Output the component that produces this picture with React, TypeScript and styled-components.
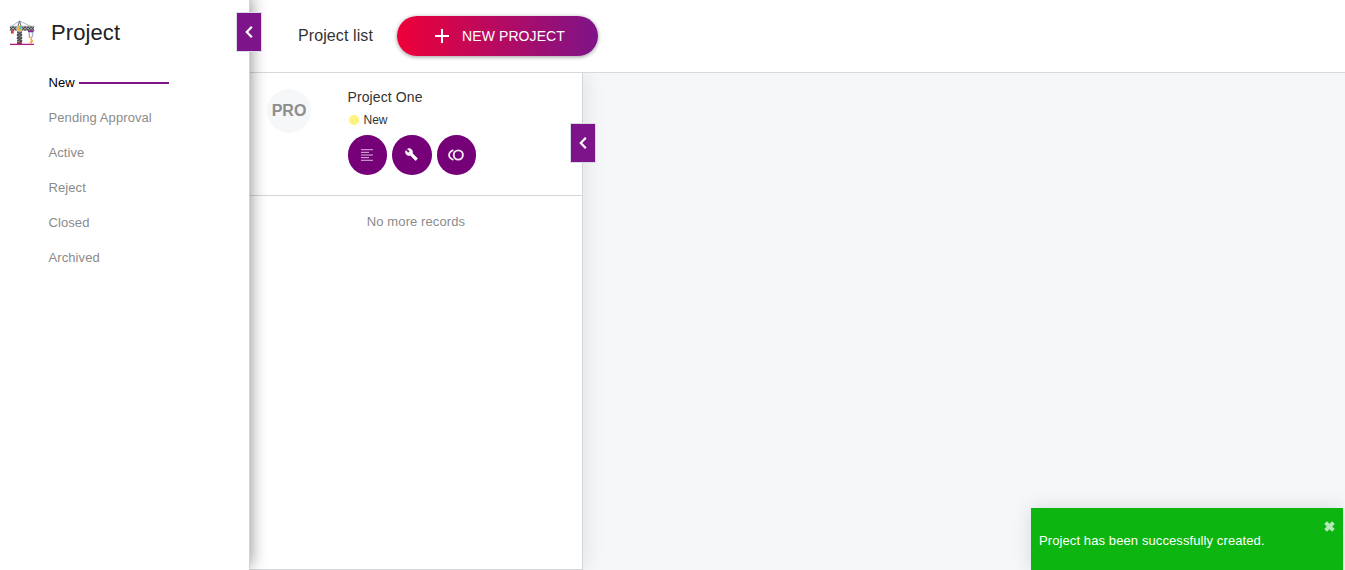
import React from 'react';
import styled, { createGlobalStyle } from 'styled-components';

const GlobalStyle = createGlobalStyle`
  * { box-sizing: border-box; }
  body {
    margin: 0;
    background: #f5f7f9;
    font-family: "Liberation Sans", Arial, Helvetica, sans-serif;
    color: #333;
    overflow: hidden;
  }
  button { font: inherit; border: 0; padding: 0; cursor: pointer; }
`;

const Page = styled.div`
  display: flex;
  height: 570px;
`;

const Sidebar = styled.aside`
  position: relative;
  z-index: 2;
  width: 250px;
  flex: none;
  background: #fff;
  border-right: 1px solid #ced4da;
  box-shadow: 0 -4px 16px rgba(0, 0, 0, 0.48);
`;

const SidebarHeader = styled.header`
  display: flex;
  align-items: center;
  gap: 16px;
  height: 65px;
  padding-left: 9px;
`;

const SidebarTitle = styled.h1`
  margin: 0;
  font-size: 22px;
  font-weight: 400;
  line-height: 28px;
  color: #212121;
  letter-spacing: 0.1px;
`;

const StatusList = styled.ul`
  list-style: none;
  margin: 0;
  padding: 0 0 0 48.5px;
`;

const StatusItem = styled.li<{ $active?: boolean }>`
  display: flex;
  align-items: center;
  gap: 4px;
  height: 35px;
  font-size: 13px;
  letter-spacing: 0.09px;
  color: ${(p) => (p.$active ? '#000' : '#8b8b8b')};
  &::after {
    content: '';
    display: ${(p) => (p.$active ? 'block' : 'none')};
    width: 90px;
    height: 2px;
    background: #7e1489;
  }
`;

const CollapseButton = styled.button<{ $top: number; $right?: number }>`
  position: absolute;
  z-index: 3;
  top: ${(p) => p.$top}px;
  right: ${(p) => p.$right ?? -13}px;
  display: flex;
  align-items: center;
  justify-content: center;
  width: 26px;
  height: 40px;
  background: #7e1489;
  border: 1px solid #dadce4;
`;

const Main = styled.main`
  display: flex;
  flex-direction: column;
  flex: 1;
  min-width: 0;
`;

const Toolbar = styled.header`
  display: flex;
  align-items: center;
  gap: 24px;
  height: 73px;
  flex: none;
  padding-left: 48px;
  background: #fff;
  border-bottom: 1px solid #d5dade;
`;

const ToolbarTitle = styled.h2`
  margin: 0;
  font-size: 16px;
  font-weight: 400;
  letter-spacing: 0.1px;
`;

const NewProjectButton = styled.button`
  display: flex;
  align-items: center;
  justify-content: center;
  gap: 13px;
  width: 201px;
  height: 40px;
  border-radius: 20px;
  background: linear-gradient(90deg, #ee0039, #7e1489);
  box-shadow: 0 1px 4px rgba(0, 0, 0, 0.4);
  color: #fff;
  && { padding-left: 5px; font-size: 14px; letter-spacing: 0.08px; }
`;

const Content = styled.div`
  display: flex;
  flex: 1;
`;

const ListPanel = styled.section`
  position: relative;
  width: 333px;
  background: #fff;
  border-right: 1px solid #d5d6d8;
  border-bottom: 1px solid #d5d6d8;
  box-shadow: 2px 0 20px rgba(0, 0, 0, 0.09);
  clip-path: inset(0 -40px 0 0);
`;

const ProjectCard = styled.article`
  display: flex;
  gap: 36.5px;
  height: 123px;
  padding: 16px 0 0 17px;
  border-bottom: 1px solid #d5d6d8;
`;

const Avatar = styled.div`
  display: flex;
  align-items: center;
  justify-content: center;
  width: 44px;
  height: 44px;
  border-radius: 50%;
  background: #f5f7f9;
  color: #8d8d8d;
  font-size: 16px;
  font-weight: 700;
`;

const ProjectName = styled.h3`
  margin: 0 0 6px;
  font-size: 14px;
  line-height: 17px;
  font-weight: 400;
  letter-spacing: 0.1px;
`;

const ProjectStatus = styled.div`
  display: flex;
  align-items: center;
  gap: 5px;
  height: 16px;
  font-size: 12px;
  &::before {
    content: '';
    width: 10px;
    height: 10px;
    margin-left: 1px;
    border-radius: 50%;
    background: #fff27d;
  }
`;

const Actions = styled.div`
  display: flex;
  gap: 5px;
  margin: 7.3px 0 0 0.3px;
`;

const ActionButton = styled.button`
  display: flex;
  align-items: center;
  justify-content: center;
  width: 39.4px;
  height: 39.4px;
  border-radius: 50%;
  background: #750078;
`;

const EmptyMessage = styled.p`
  margin: 18px 0 0;
  text-align: center;
  font-size: 13px;
  line-height: 15px;
  letter-spacing: 0.1px;
  color: #8b8b8b;
`;

const Toast = styled.div`
  position: absolute;
  z-index: 5;
  left: 1031px;
  top: 508px;
  width: 312px;
  height: 62px;
  padding: 25px 8px 0;
  background: #0cb50f;
  box-shadow: 0 0 18px rgba(0, 0, 0, 0.13);
  color: #fff;
  font-size: 13px;
  line-height: 16px;
  letter-spacing: 0.1px;
`;

const ToastClose = styled.button`
  position: absolute;
  top: 12.5px;
  right: 8px;
  display: flex;
  background: none;
`;

const Chevron = () => (
  <svg width="8" height="12" viewBox="0 0 8 12" fill="none" stroke="#fff" strokeWidth="2.2">
    <path d="M6.8 .8 1.8 6l5 5.2" />
  </svg>
);

const Crane = () => (
  <svg width="26" height="26" viewBox="0 0 26 26" fill="none">
    <path d="M10.5 1 1.5 7M10.5 1l13 6" stroke="#a4aec0" strokeWidth=".9" />
    <path d="M8.8 6.5 10.5 1l1.7 5.5" stroke="#5d6675" strokeWidth="1" />
    <path d="M1 5.8h24v4.9H1z" fill="#a9abad" />
    <path d="m1 10.5 3-4 3 4M13 6.7l3 3.8 3-3.8 3 3.8 3-3.8M1 7l3 3.5 3-3.5M13 10.5l3-3.8 3 3.8 3-3.8 3 3.8" stroke="#414347" strokeWidth="1" />
    <path d="M8 11h5v12H8z" fill="#a9abad" />
    <path d="m8.3 12 4.4 3-4.4 3 4.4 3-4.4 2M12.7 12l-4.4 3 4.4 3-4.4 3" stroke="#3f3f43" strokeWidth="1.1" />
    <path d="M8 5.7h5v5.2H8z" fill="#f5b642" />
    <path d="M10.3 6h2.2v3.2h-2.2z" fill="#55bfc3" />
    <path d="M2 10.3h2.7v3.2H2z" fill="#e22b32" />
    <path d="M19 10.3h5.7v2H19z" fill="#83298e" />
    <path d="M20.3 12v6M23.5 12v5" stroke="#a8b0cf" strokeWidth="1.4" />
    <path d="M22.3 16.5v3.3l.9 1.2-1 1.6-1.5-.7" stroke="#f0ad45" strokeWidth="1.7" />
    <path d="M8 22.3h5V24H8z" fill="#a2323c" />
    <path d="M1 24.4h24" stroke="#a91d83" strokeWidth="1.3" />
  </svg>
);

const Plus = () => (
  <svg width="14" height="14" viewBox="0 0 14 14" fill="#fff">
    <path d="M6 0h2v6h6v2H8v6H6V8H0V6h6z" />
  </svg>
);

const AlignLeft = () => (
  <svg width="12" height="12" viewBox="0 0 12 12" stroke="#fff" strokeOpacity=".72" strokeWidth="1">
    <path d="M0 .7h12M0 3.35h8M0 6h12M0 8.65h8M0 11.3h12" />
  </svg>
);

const Wrench = () => (
  <svg width="13" height="13" viewBox="0 0 24 24" fill="#fff" stroke="#fff" strokeWidth="1.2">
    <path d="m22.7 19-9.1-9.1c.9-2.3.4-5-1.5-6.9-2-2-5-2.4-7.4-1.3L9 6 6 9 1.6 4.7C.4 7.1.9 10.1 2.9 12.1c1.9 1.9 4.6 2.4 6.9 1.5l9.1 9.1c.4.4 1 .4 1.4 0l2.3-2.3c.5-.4.5-1.1.1-1.4z" />
  </svg>
);

const Rings = () => (
  <svg width="16" height="12" viewBox="0 0 16 12" fill="none" stroke="#fff" strokeOpacity=".92">
    <circle cx="10.3" cy="6" r="4.6" strokeWidth="1.9" />
    <path d="M5.4 1.2C-.4 3.5-.4 8.5 5.4 10.8" strokeWidth="1.8" />
  </svg>
);

const Cross = () => (
  <svg width="11" height="11" viewBox="0 0 11 11" stroke="#b5e8b6" strokeWidth="3.8">
    <path d="m1.6 1.6 7.8 7.8M9.4 1.6 1.6 9.4" />
  </svg>
);

const statuses = ['New', 'Pending Approval', 'Active', 'Reject', 'Closed', 'Archived'];

export default function App() {
  return (
    <>
      <GlobalStyle />
      <Page>
        <Sidebar>
          <SidebarHeader>
            <Crane />
            <SidebarTitle>Project</SidebarTitle>
          </SidebarHeader>
          <StatusList>
            {statuses.map((status) => (
              <StatusItem key={status} $active={status === 'New'}>{status}</StatusItem>
            ))}
          </StatusList>
          <CollapseButton $top={12} aria-label="Collapse menu"><Chevron /></CollapseButton>
        </Sidebar>
        <Main>
          <Toolbar>
            <ToolbarTitle>Project list</ToolbarTitle>
            <NewProjectButton><Plus />NEW PROJECT</NewProjectButton>
          </Toolbar>
          <Content>
            <ListPanel>
              <ProjectCard>
                <Avatar>PRO</Avatar>
                <div>
                  <ProjectName>Project One</ProjectName>
                  <ProjectStatus>New</ProjectStatus>
                  <Actions>
                    <ActionButton aria-label="Details"><AlignLeft /></ActionButton>
                    <ActionButton aria-label="Settings"><Wrench /></ActionButton>
                    <ActionButton aria-label="Status"><Rings /></ActionButton>
                  </Actions>
                </div>
              </ProjectCard>
              <EmptyMessage>No more records</EmptyMessage>
              <CollapseButton $top={50} $right={-14} aria-label="Collapse list"><Chevron /></CollapseButton>
            </ListPanel>
          </Content>
        </Main>
      </Page>
      <Toast role="status">
        Project has been successfully created.
        <ToastClose aria-label="Close"><Cross /></ToastClose>
      </Toast>
    </>
  );
}
